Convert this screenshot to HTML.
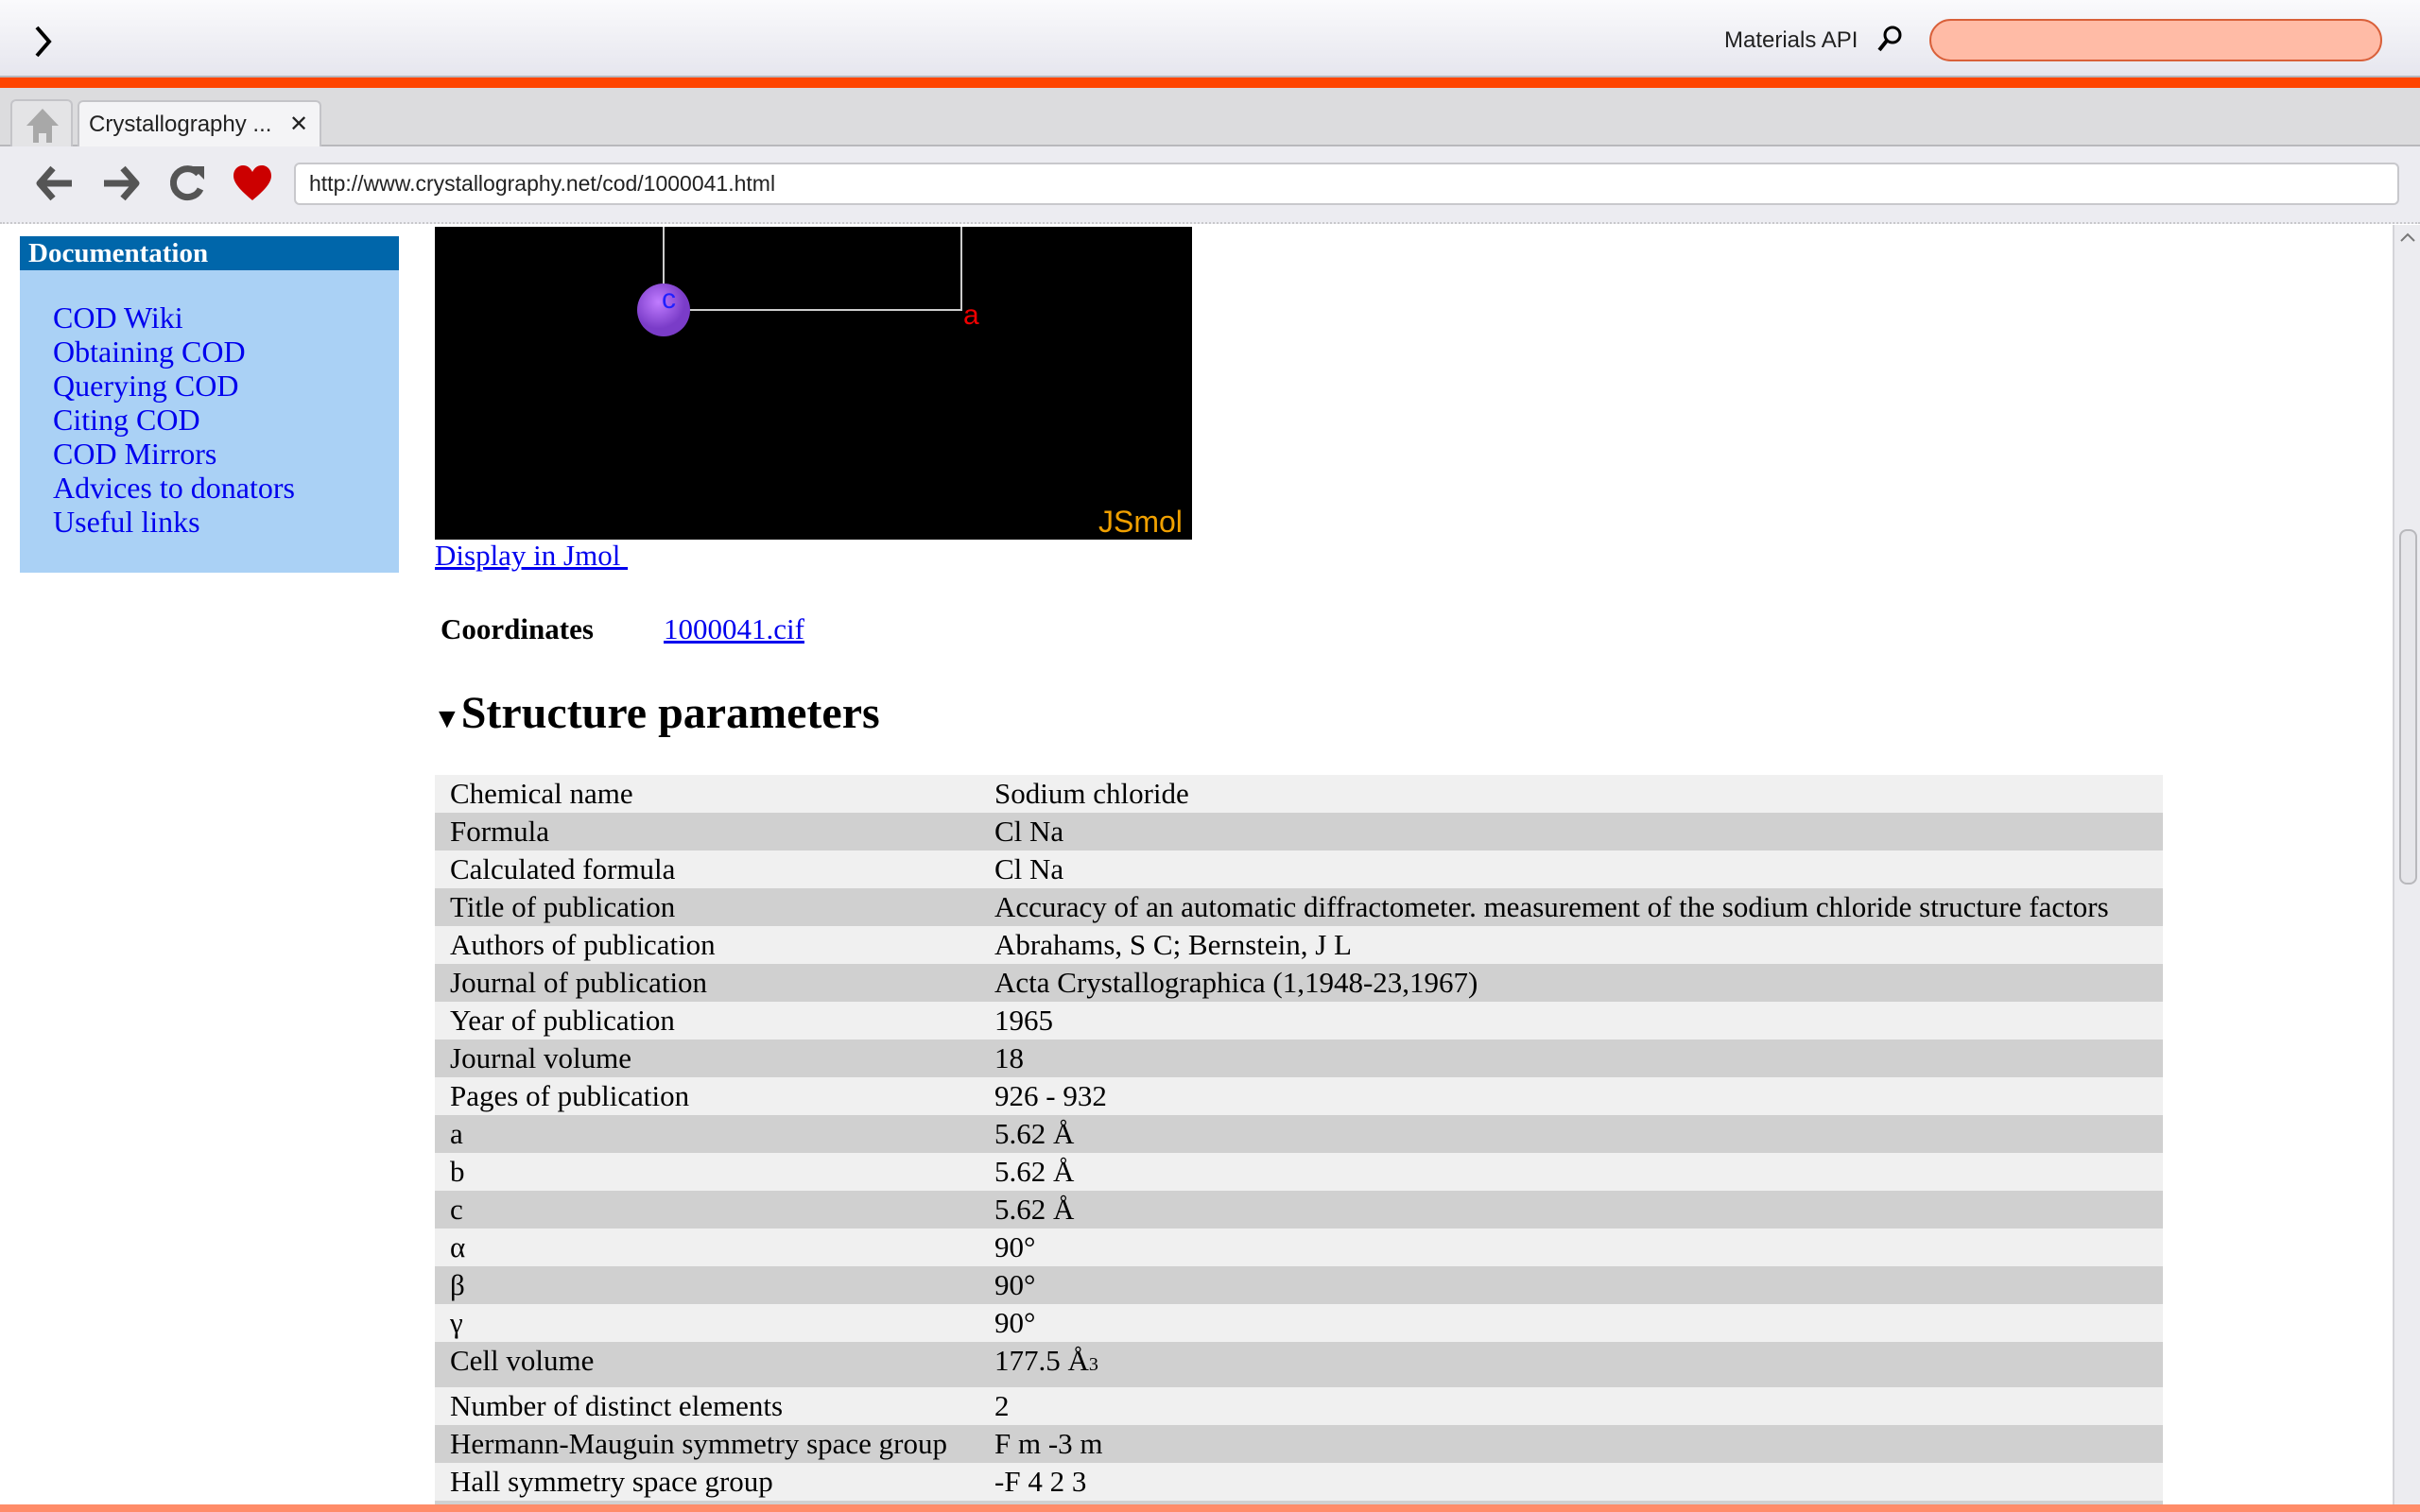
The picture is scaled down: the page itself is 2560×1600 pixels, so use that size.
<!DOCTYPE html>
<html style="width:2560px;height:1600px;overflow:hidden"><head><meta charset="utf-8">
<style>
*{margin:0;padding:0;box-sizing:border-box}
body{width:2560px;height:1600px;overflow:hidden;position:relative;background:#fff;font-family:"Liberation Serif",serif}
.abs{position:absolute}
#top{left:0;top:0;width:2560px;height:82px;background:linear-gradient(#fafafc,#e6e6ee);border-bottom:2px solid #b8b8be}
#orange{left:0;top:82px;width:2560px;height:11px;background:#ff4500}
#tabs{left:0;top:93px;width:2560px;height:62px;background:#dcdcde;border-bottom:2px solid #b8b8bc}
#tool{left:0;top:155px;width:2560px;height:82px;background:#ececf1;border-bottom:2px dotted #c8c8cc}
.sans{font-family:"Liberation Sans",sans-serif}
#side{left:21px;top:250px;width:401px;height:356px;background:#aad1f5}
#side .h{background:#0066aa;color:#fff;font-weight:bold;font-size:29px;height:36px;line-height:36px;padding-left:9px}
#side a{display:block;color:#0000ee;text-decoration:none;font-size:32px;line-height:36px;padding-left:35px}
#wrap{position:absolute;left:460px;top:820px;width:1828px;height:772px;overflow:hidden}
table{width:1828px;border-collapse:collapse;font-size:31px}
td{height:40px;padding:0 0 0 16px;vertical-align:middle;color:#000;white-space:nowrap}
tr:nth-child(odd){background:#f0f0f0}
tr:nth-child(even){background:#d0d0d0}
td:first-child{width:576px}
</style></head><body>
<div id="top" class="abs">
  <svg class="abs" style="left:34px;top:26px" width="24" height="36" viewBox="0 0 24 36"><path d="M5 3 L18 18 L5 33" stroke="#000" stroke-width="4" fill="none"/></svg>
  <div class="abs sans" style="left:1824px;top:29px;font-size:24px;color:#222">Materials API</div>
  <svg class="abs" style="left:1984px;top:26px" width="30" height="32" viewBox="0 0 30 32"><circle cx="18" cy="11" r="8" stroke="#000" stroke-width="3" fill="none"/><path d="M12 17 L4 27" stroke="#000" stroke-width="4"/></svg>
  <div class="abs" style="left:2041px;top:20px;width:479px;height:45px;border-radius:23px;background:#ffbba6;border:2px solid #d9603a"></div>
</div>
<div id="orange" class="abs"></div>
<div id="tabs" class="abs">
  <div class="abs" style="left:11px;top:12px;width:66px;height:50px;background:#e4e4e6;border:2px solid #c4c4c8;border-bottom:none;border-radius:6px 6px 0 0">
    <svg class="abs" style="left:13px;top:6px" width="38" height="38" viewBox="0 0 38 38"><path d="M19 2 L36 20 L29 20 L29 38 L23 38 L23 28 L15 28 L15 38 L9 38 L9 20 L2 20 Z" fill="#a8a8a8"/></svg>
  </div>
  <div class="abs sans" style="left:82px;top:13px;width:258px;height:49px;background:#f4f4f6;border:2px solid #c4c4c8;border-bottom:none;border-radius:6px 6px 0 0;font-size:24px;color:#222;line-height:48px;padding-left:10px">Crystallography ... <span style="position:absolute;left:222px;font-size:24px">✕</span></div>
</div>
<div id="tool" class="abs">
  <svg class="abs" style="left:36px;top:17px" width="44" height="44" viewBox="0 0 44 44"><path d="M20 6 L6 22 L20 38 M6 22 L40 22" stroke="#555" stroke-width="7" fill="none" stroke-linejoin="round"/></svg>
  <svg class="abs" style="left:106px;top:17px" width="44" height="44" viewBox="0 0 44 44"><path d="M24 6 L38 22 L24 38 M38 22 L4 22" stroke="#555" stroke-width="7" fill="none" stroke-linejoin="round"/></svg>
  <svg class="abs" style="left:176px;top:17px" width="44" height="44" viewBox="0 0 44 44"><path d="M34 12 A15 15 0 1 0 36 28" stroke="#555" stroke-width="7" fill="none"/><path d="M26 4 L40 4 L40 18 Z" fill="#555"/></svg>
  <svg class="abs" style="left:245px;top:19px" width="44" height="40" viewBox="0 0 44 40"><path d="M22 38 C10 28 2 20 2 12 C2 5 7 1 12 1 C17 1 20 4 22 8 C24 4 27 1 32 1 C37 1 42 5 42 12 C42 20 34 28 22 38 Z" fill="#cc0000"/></svg>
  <div class="abs sans" style="left:311px;top:17px;width:2227px;height:45px;background:#fff;border:2px solid #c8c8cc;border-radius:6px;font-size:23px;color:#222;line-height:41px;padding-left:14px">http://www.crystallography.net/cod/1000041.html</div>
</div>
<div id="side" class="abs">
  <div class="h">Documentation</div>
  <div style="height:32px"></div>
  <a>COD Wiki</a><a>Obtaining COD</a><a>Querying COD</a><a>Citing COD</a><a>COD Mirrors</a><a>Advices to donators</a><a>Useful links</a>
</div>
<svg class="abs" style="left:460px;top:240px" width="801" height="331" viewBox="0 0 801 331">
  <rect width="801" height="331" fill="#000"/>
  <path d="M242 0 L242 88 L557 88 L557 0" stroke="#ccc" stroke-width="2" fill="none"/>
  <defs><radialGradient id="g" cx="0.4" cy="0.35"><stop offset="0" stop-color="#c07cff"/><stop offset="1" stop-color="#7a3cc8"/></radialGradient></defs>
  <circle cx="242" cy="88" r="28" fill="url(#g)"/>
  <text x="240" y="86" font-family="Liberation Sans" font-size="30" fill="#2020ff">c</text>
  <text x="559" y="103" font-family="Liberation Sans" font-size="30" fill="#ee0000">a</text>
  <text x="702" y="323" font-family="Liberation Sans" font-size="32" fill="#f0a000">JSmol</text>
</svg>
<div class="abs" style="left:460px;top:570px;font-size:31px;color:#0000ee;text-decoration:underline">Display in Jmol&nbsp;</div>
<div class="abs" style="left:466px;top:648px;font-size:31px;font-weight:bold">Coordinates</div>
<div class="abs" style="left:702px;top:648px;font-size:31px;color:#0000ee;text-decoration:underline">1000041.cif</div>
<div class="abs" style="left:458px;top:727px;font-size:48px;font-weight:bold"><span style="font-size:30px">▼</span>Structure parameters</div>
<div id="wrap"><table>
<tr><td>Chemical name</td><td>Sodium chloride</td></tr>
<tr><td>Formula</td><td>Cl Na</td></tr>
<tr><td>Calculated formula</td><td>Cl Na</td></tr>
<tr><td>Title of publication</td><td>Accuracy of an automatic diffractometer. measurement of the sodium chloride structure factors</td></tr>
<tr><td>Authors of publication</td><td>Abrahams, S C; Bernstein, J L</td></tr>
<tr><td>Journal of publication</td><td>Acta Crystallographica (1,1948-23,1967)</td></tr>
<tr><td>Year of publication</td><td>1965</td></tr>
<tr><td>Journal volume</td><td>18</td></tr>
<tr><td>Pages of publication</td><td>926 - 932</td></tr>
<tr><td>a</td><td>5.62 Å</td></tr>
<tr><td>b</td><td>5.62 Å</td></tr>
<tr><td>c</td><td>5.62 Å</td></tr>
<tr><td>α</td><td>90°</td></tr>
<tr><td>β</td><td>90°</td></tr>
<tr><td>γ</td><td>90°</td></tr>
<tr><td style="height:48px;vertical-align:top;padding-top:2px">Cell volume</td><td style="vertical-align:top;padding-top:2px">177.5 Å<span style="font-size:20px">3</span></td></tr>
<tr><td>Number of distinct elements</td><td>2</td></tr>
<tr><td>Hermann-Mauguin symmetry space group</td><td>F m -3 m</td></tr>
<tr><td>Hall symmetry space group</td><td>-F 4 2 3</td></tr>
<tr><td></td><td></td></tr>
</table></div>
<div class="abs" style="left:2531px;top:238px;width:29px;height:1354px;background:#ececf0;border-left:2px solid #d4d4d8">
  <svg class="abs" style="left:6px;top:8px" width="16" height="10" viewBox="0 0 16 10"><path d="M1 9 L8 2 L15 9" stroke="#777" stroke-width="2" fill="none"/></svg>
  <div class="abs" style="left:5px;top:322px;width:19px;height:376px;border:2px solid #b8b8bc;border-radius:8px;background:#e6e6ea"></div>
</div>
<div class="abs" style="left:0;top:1592px;width:2560px;height:8px;background:#ff8c69"></div>
</body></html>
